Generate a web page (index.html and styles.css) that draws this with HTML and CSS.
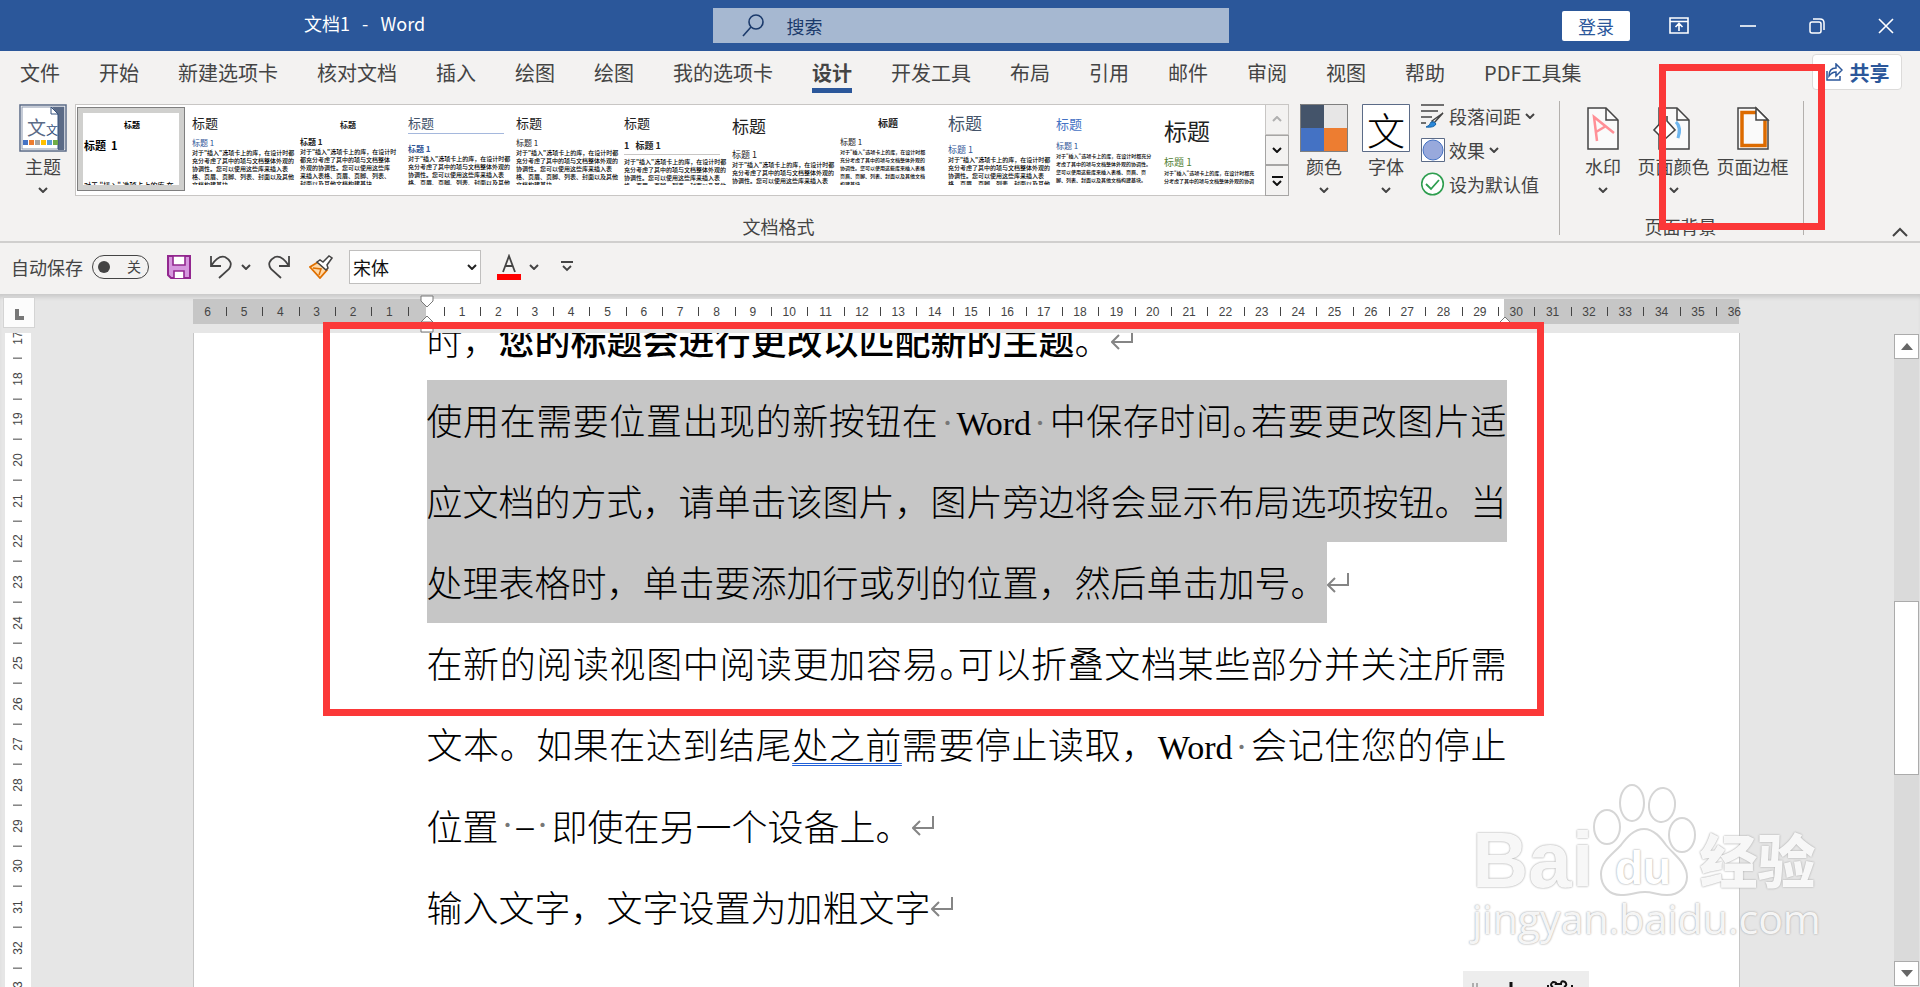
FILE: index.html
```html
<!DOCTYPE html>
<html lang="zh-CN">
<head>
    <meta charset="UTF-8">
    <meta name="viewport" content="width=device-width, initial-scale=1.0">
    <title>文档1 - Word</title>
    <link rel="stylesheet" href="styles.css">
</head>
<body>

    <!-- Shared chevron -->
    <svg class="defs" width="0" height="0">
        <symbol id="chevron" viewBox="0 0 10 6"><path d="M1 1l4 4 4-4" fill="none" stroke="currentColor" stroke-width="2"/></symbol>
        <symbol id="return" viewBox="0 0 22 22"><path d="M21 1v12H2M8 6l-7 7 7 7" fill="none" stroke="#858585" stroke-width="2"/></symbol>
    </svg>

    <!-- Title bar -->
    <header class="titlebar">
        <div class="doc-title">文档1 &nbsp;&nbsp;-&nbsp;&nbsp; Word</div>
        <label class="search">
            <svg width="22" height="24" viewBox="0 0 22 24"><g fill="none" stroke="#1b3a6b" stroke-width="1.600"><circle cx="14" cy="8" r="7"/><path d="M9 13l-8 9"/></g></svg>
            <input type="text" placeholder="搜索" aria-label="搜索">
        </label>
        <div class="window-buttons">
            <button class="login">登录</button>
            <button class="win" aria-label="功能区显示选项"><svg width="20" height="17" viewBox="0 0 20 17"><path d="M1 1h18v15H1zM1 4.500h18M10 14V7M6.500 10L10 6.500l3.500 3.500" fill="none" stroke="#fff" stroke-width="1.600"/></svg></button>
            <button class="win" aria-label="最小化"><svg width="16" height="16" viewBox="0 0 16 16"><path d="M0 8h16" stroke="#fff" stroke-width="1.600"/></svg></button>
            <button class="win" aria-label="还原"><svg width="16" height="16" viewBox="0 0 16 16"><g fill="none" stroke="#fff" stroke-width="1.500"><rect x="1" y="4" width="11" height="11" rx="2"/><path d="M4 1h7q4 0 4 4v7"/></g></svg></button>
            <button class="win" aria-label="关闭"><svg width="16" height="16" viewBox="0 0 16 16"><path d="M1 1l14 14M15 1L1 15" stroke="#fff" stroke-width="1.600"/></svg></button>
        </div>
    </header>

    <!-- Ribbon tabs -->
    <nav class="tabs">
        <a href="#">文件</a>
        <a href="#">开始</a>
        <a href="#">新建选项卡</a>
        <a href="#">核对文档</a>
        <a href="#">插入</a>
        <a href="#">绘图</a>
        <a href="#">绘图</a>
        <a href="#">我的选项卡</a>
        <a href="#" class="active">设计</a>
        <a href="#">开发工具</a>
        <a href="#">布局</a>
        <a href="#">引用</a>
        <a href="#">邮件</a>
        <a href="#">审阅</a>
        <a href="#">视图</a>
        <a href="#">帮助</a>
        <a href="#">PDF工具集</a>
        <button class="share">
            <svg width="18" height="18" viewBox="0 0 18 18"><path d="M2 8v9h13v-4M4 13q0-8 7-8V1l6 6-6 6V9q-4 0-7 4z" fill="none" stroke="#2b579a" stroke-width="1.500"/></svg>
            共享
        </button>
    </nav>

    <!-- Ribbon body -->
    <section class="ribbon">
        <div class="group formatting">
            <div class="group-row">
                <button class="big">
                    <svg width="48" height="48" viewBox="0 0 48 48">
                        <rect x="1" y="1" width="46" height="46" fill="#fff" stroke="#5b6b87" stroke-width="1.500"/>
                        <rect x="3" y="3" width="42" height="42" fill="#fff" stroke="#8b98ad"/>
                        <path d="M33 3h12v43H39V11z" fill="#5b6b87"/><path d="M32 3v7h7z" fill="#fff" stroke="#34507c"/><path d="M39 10v35" stroke="#34507c"/>
                        <text x="8" y="31" font-size="19" fill="#5b6b87">文</text><text x="27" y="31" font-size="12" fill="#34507c">文</text>
                        <path fill="#4472c4" d="M4 36h5v5H4z"/><path fill="#ed7d31" d="M10 36h5v5h-5z"/><path fill="#a5a5a5" d="M16 36h5v5h-5z"/><path fill="#ffc000" d="M22 36h5v5h-5z"/><path fill="#5b9bd5" d="M28 36h5v5h-5z"/><path fill="#70ad47" d="M34 36h5v5h-5z"/>
                    </svg>
                    <span>主题</span>
                    <svg class="chev"><use href="#chevron"/></svg>
                </button>
                <div class="gallery">
                    <button class="thumb t1 selected"><b class="title">标题</b><b class="head">标题 &nbsp;1</b><span class="body">对于 "插入" 选项卡上的库,在</span></button>
                    <button class="thumb t2"><span class="title">标题</span><span class="head blue">标题 1</span><span class="body">对于"插入"选项卡上的库，在设计时都<br>充分考虑了其中的项与文档整体外观的<br>协调性。您可以使用这些库来插入表<br>格、页眉、页脚、列表、封面以及其他<br>文档构建基块。</span></button>
                    <button class="thumb t3"><b class="title">标题</b><b class="head">标题 1</b><span class="body">对于"插入"选项卡上的库，在设计时<br>都充分考虑了其中的项与文档整体<br>外观的协调性。您可以使用这些库<br>来插入表格、页眉、页脚、列表、<br>封面以及其他文档构建基块。</span></button>
                    <button class="thumb t4"><span class="title">标题</span><b class="head blue">标题 1</b><span class="body">对于"插入"选项卡上的库，在设计时都<br>充分考虑了其中的项与文档整体外观的<br>协调性。您可以使用这些库来插入表<br>格、页眉、页脚、列表、封面以及其他</span></button>
                    <button class="thumb t5"><span class="title">标题</span><span class="head">标题 1</span><span class="body">对于"插入"选项卡上的库，在设计时都<br>充分考虑了其中的项与文档整体外观的<br>协调性。您可以使用这些库来插入表<br>格、页眉、页脚、列表、封面以及其他<br>文档构建基块。</span></button>
                    <button class="thumb t6"><span class="title">标题</span><b class="head">1 &nbsp; 标题 1</b><span class="body">对于"插入"选项卡上的库，在设计时都<br>充分考虑了其中的项与文档整体外观的<br>协调性。您可以使用这些库来插入表<br>格、页眉、页脚、列表、封面以及其他</span></button>
                    <button class="thumb t7"><span class="title">标题</span><span class="head">标题 1</span><span class="body">对于"插入"选项卡上的库，在设计时都<br>充分考虑了其中的项与文档整体外观的<br>协调性。您可以使用这些库来插入表</span></button>
                    <button class="thumb t8"><b class="title">标题</b><span class="head">标题 1</span><span class="body">对于"插入"选项卡上的库，在设计时都<br>充分考虑了其中的项与文档整体外观的<br>协调性。您可以使用这些库来插入表格<br>页眉、页脚、列表、封面以及其他文档<br>构建基块。</span></button>
                    <button class="thumb t9"><span class="title">标题</span><span class="head blue">标题 1</span><span class="body">对于"插入"选项卡上的库，在设计时都<br>充分考虑了其中的项与文档整体外观的<br>协调性。您可以使用这些库来插入表<br>格、页眉、页脚、列表、封面以及其他</span></button>
                    <button class="thumb t10"><span class="title">标题</span><span class="head blue">标题 1</span><span class="body">对于"插入"选项卡上的库，在设计时都充分<br>考虑了其中的项与文档整体外观的协调性。<br>您可以使用这些库来插入表格、页眉、页<br>脚、列表、封面以及其他文档构建基块。</span></button>
                    <button class="thumb t11"><span class="title">标题</span><span class="head">标题 1</span><span class="body">对于"插入"选项卡上的库，在设计时都充<br>分考虑了其中的项与文档整体外观的协调</span></button>
                    <div class="gallery-scroll">
                        <button disabled aria-label="上一行"><svg class="chev up"><use href="#chevron"/></svg></button>
                        <button aria-label="下一行"><svg class="chev"><use href="#chevron"/></svg></button>
                        <button class="more" aria-label="其他"><svg class="chev"><use href="#chevron"/></svg></button>
                    </div>
                </div>
                <button class="big">
                    <svg width="48" height="48" viewBox="0 0 48 48"><path fill="#44546a" d="M0 0h24v24H0z"/><path fill="#e7e6e6" d="M24 0h24v24H24z"/><path fill="#4472c4" d="M0 24h24v24H0z"/><path fill="#ed7d31" d="M24 24h24v24H24z"/><path d="M.5.5h47v47H.5z" fill="none" stroke="#7f7f7f"/></svg>
                    <span>颜色</span>
                    <svg class="chev"><use href="#chevron"/></svg>
                </button>
                <button class="big">
                    <svg width="48" height="48" viewBox="0 0 48 48"><path d="M.5.5h47v47H.5z" fill="#fff" stroke="#5b6b87"/><text x="5" y="41" font-size="38" font-weight="300" fill="#000">文</text></svg>
                    <span>字体</span>
                    <svg class="chev"><use href="#chevron"/></svg>
                </button>
                <div class="small-list">
                    <button>
                        <svg width="24" height="24" viewBox="0 0 24 24"><path d="M0 1h23M0 7h17M0 13h11M0 19h5" stroke="#444" stroke-width="1.600"/><path d="M22 9l-9 10-2-2z" fill="#fff" stroke="#444" stroke-width="1.500"/><path d="M5 23q4-1 5-5 4-1 5 2-2 4-10 3z" fill="#2b88d8" stroke="#1664a8"/></svg>
                        <span>段落间距</span><svg class="chev"><use href="#chevron"/></svg>
                    </button>
                    <button>
                        <svg width="24" height="24" viewBox="0 0 24 24"><path d="M.5.5h23v23H.5z" fill="#fff" stroke="#5b6b87"/><circle cx="12" cy="12" r="10" fill="#98a9dc" stroke="#4472c4"/></svg>
                        <span>效果</span><svg class="chev"><use href="#chevron"/></svg>
                    </button>
                    <button>
                        <svg width="24" height="24" viewBox="0 0 24 24"><circle cx="11.500" cy="12" r="10.800" fill="#fff" stroke="#2e9e4f" stroke-width="1.600"/><path d="M5 12l5 5 8-9" fill="none" stroke="#2e9e4f" stroke-width="1.800"/></svg>
                        <span>设为默认值</span>
                    </button>
                </div>
            </div>
            <div class="group-name">文档格式</div>
        </div>

        <div class="group background">
            <div class="group-row">
                <button class="big">
                    <svg width="48" height="48" viewBox="0 0 48 48"><path d="M9 4h18l12 12v29H9z" fill="#fafafa" stroke="#444" stroke-width="1.500"/><path d="M27 4v12h12" fill="none" stroke="#444" stroke-width="1.500"/><path d="M18 37L15 13l20 16M17 28l10-6" fill="none" stroke="#ff8f96" stroke-width="2.500"/></svg>
                    <span>水印</span>
                    <svg class="chev"><use href="#chevron"/></svg>
                </button>
                <button class="big">
                    <svg width="48" height="48" viewBox="0 0 48 48"><path d="M9 4h18l12 12v29H9z" fill="#fafafa" stroke="#444" stroke-width="1.500"/><path d="M27 4v12h12" fill="none" stroke="#444" stroke-width="1.500"/><path d="M26 18q6 6 2 16 3-12-2-16z" fill="#6db5ee" stroke="#6db5ee" stroke-width="3"/><path d="M14 15L4 26l10 10 11-10-8-9v-5" fill="#fff" stroke="#444" stroke-width="1.600"/></svg>
                    <span>页面颜色</span>
                    <svg class="chev"><use href="#chevron"/></svg>
                </button>
                <button class="big">
                    <svg width="48" height="48" viewBox="0 0 48 48"><path d="M9 4h18l12 12v29H9z" fill="#fafafa" stroke="#444" stroke-width="1.500"/><path d="M28 8.500H13v33h23V16" fill="none" stroke="#dd6b00" stroke-width="3.500"/><path d="M27 4v12h12z" fill="#fff" stroke="#444" stroke-width="1.500"/></svg>
                    <span>页面边框</span>
                </button>
            </div>
            <div class="group-name">页面背景</div>
        </div>
        <button class="collapse" aria-label="折叠功能区"><svg width="16" height="10"><path d="M1 9l7-7 7 7" fill="none" stroke="#444" stroke-width="2"/></svg></button>
    </section>

    <!-- Quick access toolbar -->
    <section class="quickbar">
        <label class="autosave">
            <span>自动保存</span>
            <span class="switch"><input type="checkbox"><span class="switch-text">关</span></span>
        </label>
        <button class="save" aria-label="保存"><svg width="24" height="24" viewBox="0 0 24 24"><path d="M1 1h22v22H4l-3-3z" fill="#d697de" stroke="#92278f" stroke-width="2"/><path d="M6 1h12v9H6zM7 23v-7h10v7" fill="#fff" stroke="#92278f" stroke-width="1.600"/></svg></button>
        <button class="undo" aria-label="撤消"><svg width="24" height="24" viewBox="0 0 24 24"><path d="M2 1v10h10M2 11Q9 0 16 2q9 5 4 12l-10 9" fill="none" stroke="#444" stroke-width="1.800"/></svg><svg class="chev"><use href="#chevron"/></svg></button>
        <button class="redo" aria-label="恢复"><svg width="24" height="24" viewBox="0 0 24 24"><path d="M22 1v10H12M22 11Q15 0 8 2q-9 5-4 12l10 9" fill="none" stroke="#444" stroke-width="1.800"/></svg></button>
        <button class="painter" aria-label="格式刷"><svg width="24" height="24" viewBox="0 0 24 24"><path d="M9 7l9 8-7 8L1 12z" fill="#ffd9a8" stroke="#e07000" stroke-width="1.800"/><path d="M4 13l8 1-2 6" fill="none" stroke="#e07000" stroke-width="1.500"/><path d="M8 7l3-2 3 2 6-6 3 2-5 7 1 3-2 2z" fill="#fff" stroke="#444" stroke-width="1.500"/></svg></button>
        <label class="font-box">
            <select aria-label="字体"><option>宋体</option></select>
            <svg class="chev"><use href="#chevron"/></svg>
        </label>
        <button class="font-color" aria-label="字体颜色"><svg width="24" height="26" viewBox="0 0 24 26"><path d="M6 18l6-16 6 16M8 12h8" fill="none" stroke="#444" stroke-width="1.800"/><path fill="#f00" d="M0 20h24v6H0z"/></svg><svg class="chev"><use href="#chevron"/></svg></button>
        <button class="overflow" aria-label="自定义快速访问工具栏"><svg width="12" height="11"><path d="M0 1h12M2 5l4 4 4-4" fill="none" stroke="#444" stroke-width="1.800"/></svg></button>
    </section>

    <!-- Document area -->
    <main class="workspace">
        <div class="corner"><button aria-label="制表符"><svg width="9" height="11"><path d="M2 0v9h7" fill="none" stroke="#777" stroke-width="4"/></svg></button></div>
        <div class="ruler-row">
            <div class="ruler">
                <div class="ruler-numbers" id="ruler-h"></div>
                <svg class="marker first" width="14" height="38" viewBox="0 0 14 38"><path d="M1 1h12v5l-6 6-6-6zM7 21l6 6H1zM1 33h12v4H1z" fill="#fff" stroke="#777"/></svg>
                <svg class="marker right" width="14" height="8" viewBox="0 0 14 8"><path d="M7 1l6 6H1z" fill="#fff" stroke="#777"/></svg>
            </div>
        </div>
        <div class="ruler-v"><div class="ruler-v-numbers" id="ruler-v"></div></div>
        <div class="canvas">
            <article class="page">
                <p class="line">时，<b>您的标题会进行更改以匹配新的主题</b>。<svg class="ret"><use href="#return"/></svg></p>
                <p class="line full marked">使用在需要位置出现的新按钮在<i class="dot">·</i><span class="latin">Word</span><i class="dot">·</i>中保存时间<span class="half">。</span>若要更改图片适</p>
                <p class="line full marked">应文档的方式，请单击该图片，图片旁边将会显示布局选项按钮。当</p>
                <p class="line"><span class="marked">处理表格时，单击要添加行或列的位置，然后单击加号。</span><svg class="ret"><use href="#return"/></svg></p>
                <p class="line full">在新的阅读视图中阅读更加容易<span class="half">。</span>可以折叠文档某些部分并关注所需</p>
                <p class="line full">文本。如果在达到结尾<u>处之前</u>需要停止读取，<span class="latin">Word</span><i class="dot">·</i>会记住您的停止</p>
                <p class="line">位置<i class="dot">·</i><span class="latin">–</span><i class="dot">·</i>即使在另一个设备上。<svg class="ret"><use href="#return"/></svg></p>
                <p class="line">输入文字，文字设置为加粗文字<svg class="ret"><use href="#return"/></svg></p>
            </article>
        </div>
        <div class="scrollbar">
            <button aria-label="向上滚动"><svg width="12" height="7"><path d="M6 0l6 7H0z" fill="#666"/></svg></button>
            <div class="track"><div class="handle"></div></div>
            <button aria-label="向下滚动"><svg width="12" height="7"><path d="M0 0h12L6 7z" fill="#666"/></svg></button>
        </div>
    </main>

    <!-- Overlays -->
    <div class="ime">
        <svg width="126" height="16" viewBox="0 0 126 16"><path d="M10 12v4M14 12v4" stroke="#999" stroke-width="1.500"/><path d="M48 11v5" stroke="#111" stroke-width="3"/><path d="M90 16q-4-2 0-5 4 0 3 2h5q0-4 4-2 3 3-1 5M84 15h2M108 15h2" fill="none" stroke="#111" stroke-width="2"/></svg>
    </div>
    <div class="brand">
        <div class="brand-top">
            <span class="brand-name">Bai</span>
            <svg width="106" height="116" viewBox="0 0 106 116">
                <g fill="#fff" fill-opacity=".8" stroke="#d6d6d6" stroke-width="2">
                    <ellipse cx="14" cy="44" rx="13" ry="17"/><ellipse cx="39" cy="20" rx="12" ry="18"/><ellipse cx="69" cy="22" rx="13" ry="17" transform="rotate(6 69 22)"/><ellipse cx="89" cy="52" rx="13" ry="17"/>
                    <path d="M51 46c10 0 17 9 22 16 8 10 21 18 21 32 0 10-8 18-20 18-9 0-14-3-22-3s-15 3-24 3C16 112 8 103 8 91c0-13 12-20 20-29 6-8 13-16 23-16z"/>
                </g>
                <text x="22" y="101" font-size="46" font-weight="700" class="brand-du">du</text>
            </svg>
            <span class="brand-cn">经验</span>
        </div>
        <div class="brand-url">jingyan.baidu.com</div>
    </div>
    <div class="mark-box mark-ribbon"></div>
    <div class="mark-box mark-text"></div>

    <script src="script.js"></script>
</body>
</html>
```
FILE: styles.css
```css
* {
    box-sizing: border-box;
}

body {
    margin: 0;
    position: relative;
    display: flex;
    flex-direction: column;
    height: 100vh;
    overflow: hidden;
    background-color: #f3f2f1;
    color: #444;
    font-family: "Noto Sans CJK SC", sans-serif;
    font-size: 18px;
}

button,
input,
select {
    font: inherit;
    color: inherit;
    background: none;
    border: none;
    padding: 0;
    margin: 0;
}

svg {
    display: block;
    flex: none;
}

.defs {
    position: absolute;
}

.chev {
    width: 10px;
    height: 6px;
}

.chev.up {
    transform: rotate(180deg);
}

/* Title bar */
.titlebar {
    display: grid;
    grid-template-columns: 37% 27% 1fr;
    align-items: center;
    height: 51px;
    background-color: #2b579a;
    color: white;
    line-height: 24px;
}

.doc-title {
    padding: 0 0 6px 304px;
}

.search {
    display: flex;
    align-items: center;
    gap: 22px;
    height: 35px;
    margin-left: 3px;
    padding-left: 29px;
    background-color: #a6b8d1;
}

.search input {
    flex: 1;
    color: #1b3a6b;
}

.search input::placeholder {
    color: #1b3a6b;
    opacity: 1;
}

.window-buttons {
    display: flex;
    justify-content: flex-end;
    align-items: center;
}

.login {
    width: 68px;
    height: 30px;
    margin-right: 14px;
    background-color: white;
    color: #2b579a;
    border-radius: 2px;
}

.win {
    display: flex;
    justify-content: center;
    width: 69px;
}

/* Tabs */
.tabs {
    display: flex;
    align-items: center;
    gap: 39px;
    height: 44px;
    padding: 0 18px 2px 20px;
    font-size: 20px;
}

.tabs a {
    position: relative;
    color: #444;
    text-decoration: none;
    white-space: nowrap;
}

.tabs .active {
    font-weight: 700;
}

.tabs .active::after {
    content: "";
    position: absolute;
    left: 0;
    right: 0;
    bottom: -6px;
    height: 5px;
    background-color: #2b579a;
}

.share {
    display: flex;
    align-items: center;
    justify-content: center;
    gap: 7px;
    width: 90px;
    height: 36px;
    margin-left: auto;
    background-color: white;
    border: 1px solid #dcdbda;
    border-radius: 4px;
    color: #2b579a;
    font-weight: 700;
}

/* Ribbon */
.ribbon {
    position: relative;
    display: flex;
    height: 148px;
    padding: 6px 0;
    border-bottom: 2px solid #d0cfce;
}

.group {
    display: flex;
    flex-direction: column;
    justify-content: space-between;
    border-right: 1px solid #b3b0ad;
}

.formatting {
    width: 1560px;
    padding-left: 12px;
}

.background {
    width: 244px;
    padding-left: 12px;
}

.group-row {
    display: flex;
    padding-top: 3px;
}

.group-name {
    padding-right: 14px;
    text-align: center;
    line-height: 18px;
}

.big {
    display: flex;
    flex-direction: column;
    align-items: center;
    width: 62px;
    line-height: 18px;
    white-space: nowrap;
}

.big span {
    margin: 5px 0 12px;
}

.formatting > .group-row > .big:first-child {
    margin-right: 1px;
}

.background .big + .big {
    width: 79px;
}

/* Style gallery */
.gallery {
    display: flex;
    width: 1214px;
    height: 92px;
    margin-right: 4px;
    background-color: white;
    border: 1px solid #c8c6c4;
}

.thumb {
    flex: none;
    width: 108px;
    height: 80px;
    padding: 8px 0 0 7px;
    overflow-x: visible;
    overflow-y: clip;
    text-align: left;
    white-space: nowrap;
    color: #222;
}

.thumb .title,
.thumb .head,
.thumb .body {
    display: block;
}

.thumb .title {
    width: 96px;
    font-size: 13px;
    line-height: 20px;
}

.thumb .head {
    width: 96px;
    margin: 6px 0 2px;
    font-size: 8px;
    line-height: 8px;
}

.thumb .body {
    color: #000;
    font-size: 6px;
    line-height: 8px;
    font-weight: 500;
}

.thumb .blue {
    color: #2f5496;
}

.thumb.selected {
    height: 84px;
    margin: 2px 0 0 1px;
    padding: 5px 6px;
    border: 1px solid #7f7f7f;
    box-shadow: inset 0 0 0 5px #d0d0ce;
    color: #000;
}

.thumb.t1 .title {
    font-size: 8px;
    line-height: 24px;
    text-align: center;
}

.thumb.t1 .head {
    margin: 0 0 28px;
    font-size: 11px;
    line-height: 16px;
}

.thumb.t1 .body {
    width: 96px;
    height: 4px;
    overflow: hidden;
    font-size: 7px;
}

.thumb.t3 .title {
    font-size: 8px;
    line-height: 24px;
    text-align: center;
}

.thumb.t3 .head {
    margin: 1px 0 2px;
}

.thumb.t4 .title {
    color: #44546a;
    border-bottom: 1px solid #a5b8dd;
}

.thumb.t4 .head {
    margin-top: 11px;
}

.thumb.t6 .head {
    margin: 9px 0 3px;
    padding-bottom: 4px;
    border-bottom: 1px solid #c8c6c4;
    font-size: 9px;
}

.thumb.t7 .title {
    font-size: 17px;
    line-height: 24px;
}

.thumb.t7 .head {
    margin-top: 13px;
    font-size: 9px;
}

.thumb.t8 .title {
    font-size: 10px;
    text-align: center;
}

.thumb.t8 .head {
    margin-top: 5px;
}

.thumb.t8 .body {
    font-size: 5px;
}

.thumb.t9 .title {
    color: #44546a;
    font-size: 17px;
}

.thumb.t9 .head {
    margin-top: 13px;
    font-size: 9px;
}

.thumb.t10 .title {
    color: #4472c4;
}

.thumb.t10 .head {
    margin-top: 8px;
}

.thumb.t10 .body {
    font-size: 5px;
}

.thumb.t11 .title {
    font-size: 23px;
    line-height: 32px;
}

.thumb.t11 .head {
    margin: 12px 0 3px;
    color: #538135;
    font-size: 10px;
}

.thumb.t11 .body {
    font-size: 5px;
}

.gallery-scroll {
    display: flex;
    flex-direction: column;
    flex: none;
    width: 24px;
    margin: -1px -1px -1px auto;
}

.gallery-scroll button {
    display: flex;
    flex: 1;
    flex-direction: column;
    align-items: center;
    justify-content: center;
    gap: 2px;
    background-color: #f3f2f1;
    border: 1px solid #a6a5a4;
    color: #111;
}

.gallery-scroll button:disabled {
    border-color: #c8c6c4;
    color: #b0b0b0;
}

.gallery-scroll .more::before {
    content: "";
    width: 11px;
    height: 2px;
    background-color: #111;
}

.small-list {
    display: flex;
    flex-direction: column;
    gap: 10px;
    margin-left: 4px;
}

.small-list button {
    display: flex;
    align-items: center;
    gap: 4px;
    height: 24px;
    line-height: 24px;
}

.collapse {
    position: absolute;
    right: 12px;
    bottom: 4px;
}

/* Quick access toolbar */
.quickbar {
    display: flex;
    align-items: center;
    height: 51px;
    padding: 0 0 4px 11px;
}

.quickbar button {
    display: flex;
    align-items: center;
    gap: 8px;
}

.autosave {
    display: flex;
    align-items: center;
    gap: 9px;
}

.switch {
    position: relative;
}

.switch input {
    appearance: none;
    display: flex;
    align-items: center;
    width: 57px;
    height: 24px;
    padding-left: 5px;
    border: 1px solid #444;
    border-radius: 12px;
}

.switch input::before {
    content: "";
    width: 12px;
    height: 12px;
    border-radius: 50%;
    background-color: #444;
}

.switch-text {
    position: absolute;
    right: 8px;
    top: 2px;
    font-size: 14px;
    line-height: 18px;
}

.save,
.undo,
.redo,
.painter {
    margin-left: 18px;
}

.redo {
    margin-left: 16px;
}

.font-box {
    position: relative;
    margin-left: 16px;
}

.font-box select {
    appearance: none;
    width: 132px;
    height: 34px;
    padding-left: 3px;
    background-color: white;
    border: 1px solid #c0bfbe;
    color: #111;
}

.font-box .chev {
    position: absolute;
    right: 4px;
    top: 14px;
    color: #222;
}

.font-color {
    margin-left: 16px;
}

.overflow {
    margin-left: 22px;
}

/* Workspace */
.workspace {
    flex: 1;
    display: grid;
    grid-template-columns: 38px 1fr 26px;
    grid-template-rows: 39px 1fr;
    min-height: 0;
    background-color: #e6e6e6;
    box-shadow: inset 0 5px 4px -2px #c8c8c8;
}

.corner button {
    display: flex;
    align-items: center;
    justify-content: center;
    width: 32px;
    height: 31px;
    margin: 3px 0 0 3px;
    padding-top: 4px;
    background-color: #fcfcfc;
    border: 1px solid #d4d4d4;
}

.ruler-row {
    grid-column: 2 / 4;
    padding: 5px 27px 0 0;
}

.ruler {
    position: relative;
    width: 1546px;
    height: 25px;
    margin: 0 auto;
    background: linear-gradient(to right, #c6c6c6 233px, #fff 233px, #fff 1311px, #c6c6c6 1311px);
}

.ruler-numbers {
    display: grid;
    grid-auto-flow: column;
    grid-auto-columns: 1fr;
    margin: 0 -14px 0 -3px;
    font-family: "Liberation Sans", sans-serif;
    font-size: 12px;
    line-height: 26px;
    text-align: center;
}

.ruler-numbers span {
    height: 25px;
}

.ruler-numbers span + span {
    background: linear-gradient(#444, #444) left center / 1px 9px no-repeat;
}

.marker {
    position: absolute;
}

.marker.first {
    left: 227px;
    top: -4px;
}

.marker.right {
    left: 1305px;
    top: 17px;
}

.ruler-v {
    width: 26px;
    margin-left: 5px;
    background-color: white;
    overflow: hidden;
}

.ruler-v-numbers {
    display: grid;
    grid-auto-rows: 1fr;
    height: 691px;
    margin-top: -15px;
    font-family: "Liberation Sans", sans-serif;
    font-size: 12px;
}

.ruler-v-numbers span {
    display: flex;
    align-items: center;
    justify-content: center;
    writing-mode: vertical-rl;
    transform: rotate(180deg);
    background: linear-gradient(#444, #444) center top / 9px 1px no-repeat;
}

.canvas {
    overflow: hidden;
}

.page {
    width: 1547px;
    height: 100%;
    margin: 0 auto;
    padding-left: 233px;
    overflow: hidden;
    background-color: white;
    border: solid #c6c6c6;
    border-width: 0 1px;
    color: #000;
    font-size: 36px;
    font-weight: 300;
}

.line {
    display: flex;
    align-items: center;
    width: 1080px;
    height: 81px;
    margin: 0;
    line-height: 79px;
    white-space: nowrap;
}

.line:first-child {
    margin-top: -34px;
}

.full {
    display: block;
    text-align: justify;
    text-align-last: justify;
}

.line b {
    font-weight: 500;
}

.marked {
    align-self: stretch;
    background-color: #c6c6c6;
}

.latin {
    font-family: "Liberation Serif", serif;
    font-size: 34px;
}

.dot {
    display: inline-block;
    width: 18px;
    text-align: center;
    text-align-last: center;
    font-family: "Liberation Serif", serif;
    font-style: normal;
    color: #777;
}

.half {
    font-feature-settings: "halt";
}

.line u {
    text-decoration: underline double #1f5fd8 1px;
    text-underline-offset: 4px;
    text-decoration-skip-ink: none;
}

.ret {
    width: 22px;
    height: 22px;
}

/* Scrollbar */
.scrollbar {
    display: flex;
    flex-direction: column;
    padding: 1px 1px 1px 0;
}

.scrollbar button {
    display: flex;
    align-items: center;
    justify-content: center;
    height: 25px;
    background-color: white;
    border: 1px solid #ababab;
}

.track {
    flex: 1;
    padding-top: 242px;
    background-color: #dadada;
}

.handle {
    height: 174px;
    background-color: white;
    border: 1px solid #ababab;
}

/* Overlays */
.ime {
    position: absolute;
    right: 331px;
    bottom: 0;
    background-color: #ededed;
}

.brand {
    position: absolute;
    right: 98px;
    bottom: 43px;
    width: 350px;
    color: rgba(255, 255, 255, 0.9);
    text-shadow: 0 0 2px #aaa, 0 0 2px #ccc;
    white-space: nowrap;
}

.brand-top {
    display: flex;
    align-items: flex-end;
    margin-bottom: -7px;
}

.brand-name {
    font: 700 78px/78px "Liberation Sans", sans-serif;
}

.brand-cn {
    padding-bottom: 6px;
    font-size: 58px;
    font-weight: 900;
    line-height: 70px;
}

.brand-du {
    fill: #fff;
    font-family: "Liberation Sans", sans-serif;
}

.brand-url {
    font: 41px/52px "Open Sans", sans-serif;
}

.mark-box {
    position: absolute;
    border: 7px solid #fb3838;
}

.mark-ribbon {
    left: 1659px;
    top: 64px;
    width: 166px;
    height: 166px;
}

.mark-text {
    left: 323px;
    top: 322px;
    width: 1221px;
    height: 394px;
}
```
FILE: script.js
```javascript
// Fill a ruler with numbers, zero stays blank
function fillRuler(id, from, to) {
    var ruler = document.getElementById(id);
    for (var i = from; i <= to; i++) {
        var cell = document.createElement("span");
        cell.textContent = i === 0 ? "" : Math.abs(i);
        ruler.appendChild(cell);
    }
}

fillRuler("ruler-h", -6, 36);
fillRuler("ruler-v", 17, 33);
```
